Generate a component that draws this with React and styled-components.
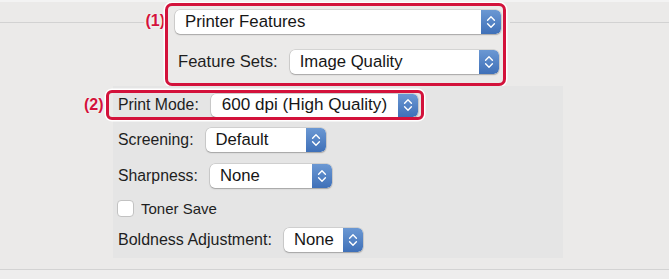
import React from "react";
import styled, { createGlobalStyle } from "styled-components";

const GlobalStyle = createGlobalStyle`
  html, body { margin: 0; padding: 0; }
  body {
    background: #ebeae9;
    font-family: "Liberation Sans", Arial, Helvetica, sans-serif;
    color: #1c1c1c;
  }
`;

const RED = "#d3123b";

const Page = styled.div`
  width: 669px;
  height: 279px;
  display: flex;
  flex-direction: column;
  background: #ebeae9;
  border-top: 2px solid #f3f3f3;
  box-sizing: border-box;
  overflow: hidden;
`;

const Header = styled.div`
  display: grid;
  grid-template-columns: 165px 341px 1fr;
  height: 84px;
  align-items: start;
`;

const HeaderSide = styled.div`
  display: flex;
  align-items: flex-start;
  gap: 1px;
  padding-left: ${(p) => p.$indent || 0}px;
`;

const Rule = styled.div`
  flex: 1;
  margin-top: 20px;
  border-top: 1px solid #d2d2d2;
`;

const Marker = styled.span`
  font-size: 16px;
  font-weight: 700;
  color: ${RED};
  line-height: 18px;
  margin-top: ${(p) => p.$top || 0}px;
  text-shadow: 0 0 2px #fff;
  white-space: nowrap;
`;

const GroupBox = styled.div`
  margin-top: 1px;
  height: 83px;
  box-sizing: border-box;
  border: 3px solid ${RED};
  border-radius: 7px;
  box-shadow: 0 0 0 1.5px #fff;
  padding: 4px 2px 0 7px;
  display: flex;
  flex-direction: column;
  gap: 16px;
`;

const Row = styled.div`
  display: flex;
  align-items: center;
  gap: ${(p) => p.$gap || 12}px;
  height: 24px;
  padding-left: ${(p) => p.$indent || 0}px;
  margin-top: ${(p) => p.$top || 0}px;
`;

const Label = styled.span`
  font-size: ${(p) => p.$size || 15.8}px;
  color: #1e1e1e;
  white-space: nowrap;
`;

const PopupBox = styled.div`
  width: ${(p) => p.$w}px;
  height: ${(p) => p.$h || 24}px;
  box-sizing: border-box;
  display: flex;
  align-items: center;
  background: #fff;
  border-radius: 5px;
  box-shadow: 0 0 0 0.5px rgba(0, 0, 0, 0.18), 0 1px 1.5px rgba(0, 0, 0, 0.22);
  overflow: hidden;
  flex-shrink: 0;
`;

const PopupText = styled.span`
  flex: 1;
  padding-left: ${(p) => p.$pad || 10}px;
  font-size: ${(p) => p.$size || 16.7}px;
  color: #161616;
  white-space: nowrap;
`;

const Stepper = styled.div`
  width: 20px;
  height: 100%;
  display: flex;
  align-items: center;
  justify-content: center;
  background: linear-gradient(#6b98d3, #3f70b8);
  border-radius: 0 5px 5px 0;
`;

const Chevrons = () => (
  <svg width="10" height="16" viewBox="0 0 10 16">
    <path d="M1.6 6.2 L5 2.8 L8.4 6.2" fill="none" stroke="#fff" strokeWidth="1.4" strokeLinecap="round" strokeLinejoin="round" />
    <path d="M1.6 9.8 L5 13.2 L8.4 9.8" fill="none" stroke="#fff" strokeWidth="1.4" strokeLinecap="round" strokeLinejoin="round" />
  </svg>
);

const Popup = ({ w, h, text, size, pad }) => (
  <PopupBox $w={w} $h={h}>
    <PopupText $size={size} $pad={pad}>{text}</PopupText>
    <Stepper>
      <Chevrons />
    </Stepper>
  </PopupBox>
);

const Panel = styled.div`
  margin-left: 113px;
  width: 450px;
  height: 172px;
  box-sizing: border-box;
  background: #e5e5e5;
  padding: 7px 0 0 5px;
  display: flex;
  flex-direction: column;
  align-items: flex-start;
`;

const AnnotatedRow = styled(Row)`
  position: relative;
  &::before {
    content: "";
    position: absolute;
    inset: -3px -6px -3px -12px;
    border: 3px solid ${RED};
    border-radius: 6px;
    box-shadow: 0 0 0 1.5px #fff;
    pointer-events: none;
  }
`;

const RowMarker = styled(Marker)`
  position: absolute;
  left: -34px;
  top: 3px;
`;

const Check = styled.span`
  width: 17px;
  height: 17px;
  box-sizing: border-box;
  background: #fff;
  border: 1px solid #c2c2c2;
  border-radius: 4px;
  flex-shrink: 0;
`;

const CheckRow = styled(Row)`
  margin-left: -1px;
`;

const Footer = styled.div`
  margin-top: 11px;
  flex: 1;
  border-top: 1px solid #d3d3d3;
  background: #eeeded;
`;

export default function App() {
  return (
    <>
      <GlobalStyle />
      <Page>
        <Header>
          <HeaderSide>
            <Rule />
            <Marker $top={10}>(1)</Marker>
          </HeaderSide>
          <GroupBox>
            <Popup w={326} text="Printer Features" size={16.8} />
            <Row $indent={3}>
              <Label $size={16.6}>Feature Sets:</Label>
              <Popup w={209} text="Image Quality" />
            </Row>
          </GroupBox>
          <HeaderSide $indent={4}>
            <Rule />
          </HeaderSide>
        </Header>
        <Panel>
          <AnnotatedRow>
            <RowMarker>(2)</RowMarker>
            <Label>Print Mode:</Label>
            <Popup w={207} h={23} text="600 dpi (High Quality)" size={17.1} pad={11} />
          </AnnotatedRow>
          <Row $top={11}>
            <Label>Screening:</Label>
            <Popup w={120} text="Default" />
          </Row>
          <Row $top={12}>
            <Label>Sharpness:</Label>
            <Popup w={122} text="None" />
          </Row>
          <CheckRow $top={8} $gap={7}>
            <Check />
            <Label $size={15}>Toner Save</Label>
          </CheckRow>
          <Row $top={8}>
            <Label $size={16}>Boldness Adjustment:</Label>
            <Popup w={79} text="None" />
          </Row>
        </Panel>
        <Footer />
      </Page>
    </>
  );
}
